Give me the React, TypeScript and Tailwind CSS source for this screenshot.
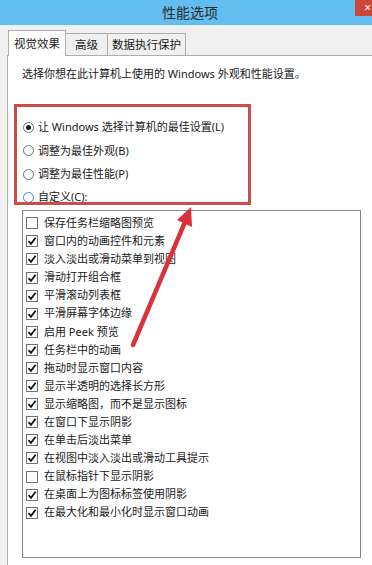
import React from "react";

const font = {
  fontFamily: '"Noto Sans", "Noto Sans CJK SC", sans-serif',
};

const radios = [
  { label: "让 Windows 选择计算机的最佳设置(L)", checked: true },
  { label: "调整为最佳外观(B)" },
  { label: "调整为最佳性能(P)" },
  { label: "自定义(C):", focus: true },
];

const items: [string, boolean][] = [
  ["保存任务栏缩略图预览", false],
  ["窗口内的动画控件和元素", true],
  ["淡入淡出或滑动菜单到视图", true],
  ["滑动打开组合框", true],
  ["平滑滚动列表框", true],
  ["平滑屏幕字体边缘", true],
  ["启用 Peek 预览", true],
  ["任务栏中的动画", true],
  ["拖动时显示窗口内容", true],
  ["显示半透明的选择长方形", true],
  ["显示缩略图，而不是显示图标", true],
  ["在窗口下显示阴影", true],
  ["在单击后淡出菜单", true],
  ["在视图中淡入淡出或滑动工具提示", true],
  ["在鼠标指针下显示阴影", false],
  ["在桌面上为图标标签使用阴影", true],
  ["在最大化和最小化时显示窗口动画", true],
];

const Radio = ({ checked, focus }: { checked?: boolean; focus?: boolean }) => (
  <span
    className={`flex h-[11px] w-[11px] shrink-0 items-center justify-center rounded-full border bg-white ${
      focus ? "border-[#3c8ad0]" : "border-[#707070]"
    }`}
  >
    {checked && <span className="h-[5px] w-[5px] rounded-full bg-[#1a1a1a]" />}
  </span>
);

const Check = ({ on }: { on: boolean }) => (
  <span className="flex h-[12px] w-[12px] shrink-0 items-center justify-center border border-[#707070] bg-white">
    {on && (
      <svg width="10" height="10" viewBox="0 0 10 10">
        <path d="M1.5 5.2 L4 7.8 L8.6 1.8" fill="none" stroke="#111" strokeWidth="1.8" />
      </svg>
    )}
  </span>
);

export default function App() {
  return (
    <div
      className="relative h-[565px] w-[372px] overflow-hidden bg-[#f0f0f0] text-[11px] text-[#1a1a1a]"
      style={font}
    >
      {/* title bar */}
      <div className="relative flex h-[25px] items-center justify-center bg-[#62bef1]">
        <span className="ml-[8px] text-[14px] text-[#2a2a2a]">性能选项</span>
        <div className="absolute right-0 top-0 flex h-[16px] w-[17px] items-center justify-end bg-[#c9463d] pr-[1px] text-[12px] leading-none text-white">
          ×
        </div>
      </div>

      {/* tabs */}
      <div className="flex h-[30px] items-end pl-[8px]">
        <div className="relative z-10 -mb-px flex h-[26px] items-center border border-b-0 border-[#adadad] bg-white px-[5px] text-[11.5px]">
          视觉效果
        </div>
        <div className="flex h-[22px] items-center border border-l-0 border-b-0 border-[#adadad] bg-[#f0f0f0] px-[9px] text-[11.5px]">
          高级
        </div>
        <div className="flex h-[22px] items-center border border-l-0 border-b-0 border-[#adadad] bg-[#f0f0f0] px-[4px] text-[11.5px]">
          数据执行保护
        </div>
      </div>

      {/* panel */}
      <div className="ml-[7px] h-[510px] border-l border-t border-[#adadad] bg-white pl-[14px] pt-[10px]">
        <div className="h-[16px] leading-[16px]">选择你想在此计算机上使用的 Windows 外观和性能设置。</div>

        <div className="mt-[34px] flex flex-col">
          {radios.map((r) => (
            <div key={r.label} className="flex h-[23.3px] items-center gap-[4px] pl-[1px]">
              <Radio checked={r.checked} focus={r.focus} />
              <span>{r.label}</span>
            </div>
          ))}
        </div>

        <div className="mt-[1px] h-[348px] w-[339px] border border-[#828790] pl-[3px] pt-[3px]">
          {items.map(([label, on]) => (
            <div key={label} className="flex h-[18.1px] items-center gap-[6px]">
              <Check on={on} />
              <span className="whitespace-nowrap">{label}</span>
            </div>
          ))}
        </div>
      </div>

      {/* annotation: red box */}
      <div className="pointer-events-none absolute left-[14px] top-[104px] h-[101px] w-[237px] border-[3px] border-[#cc4b4b]" />

      {/* annotation: arrow */}
      <svg className="pointer-events-none absolute left-0 top-0" width="372" height="565">
        <line x1="133" y1="345" x2="185" y2="222" stroke="#d8323b" strokeWidth="4.5" strokeLinecap="round" />
        <polygon points="191,207 177,220 192,227" fill="#d8323b" />
      </svg>
    </div>
  );
}
